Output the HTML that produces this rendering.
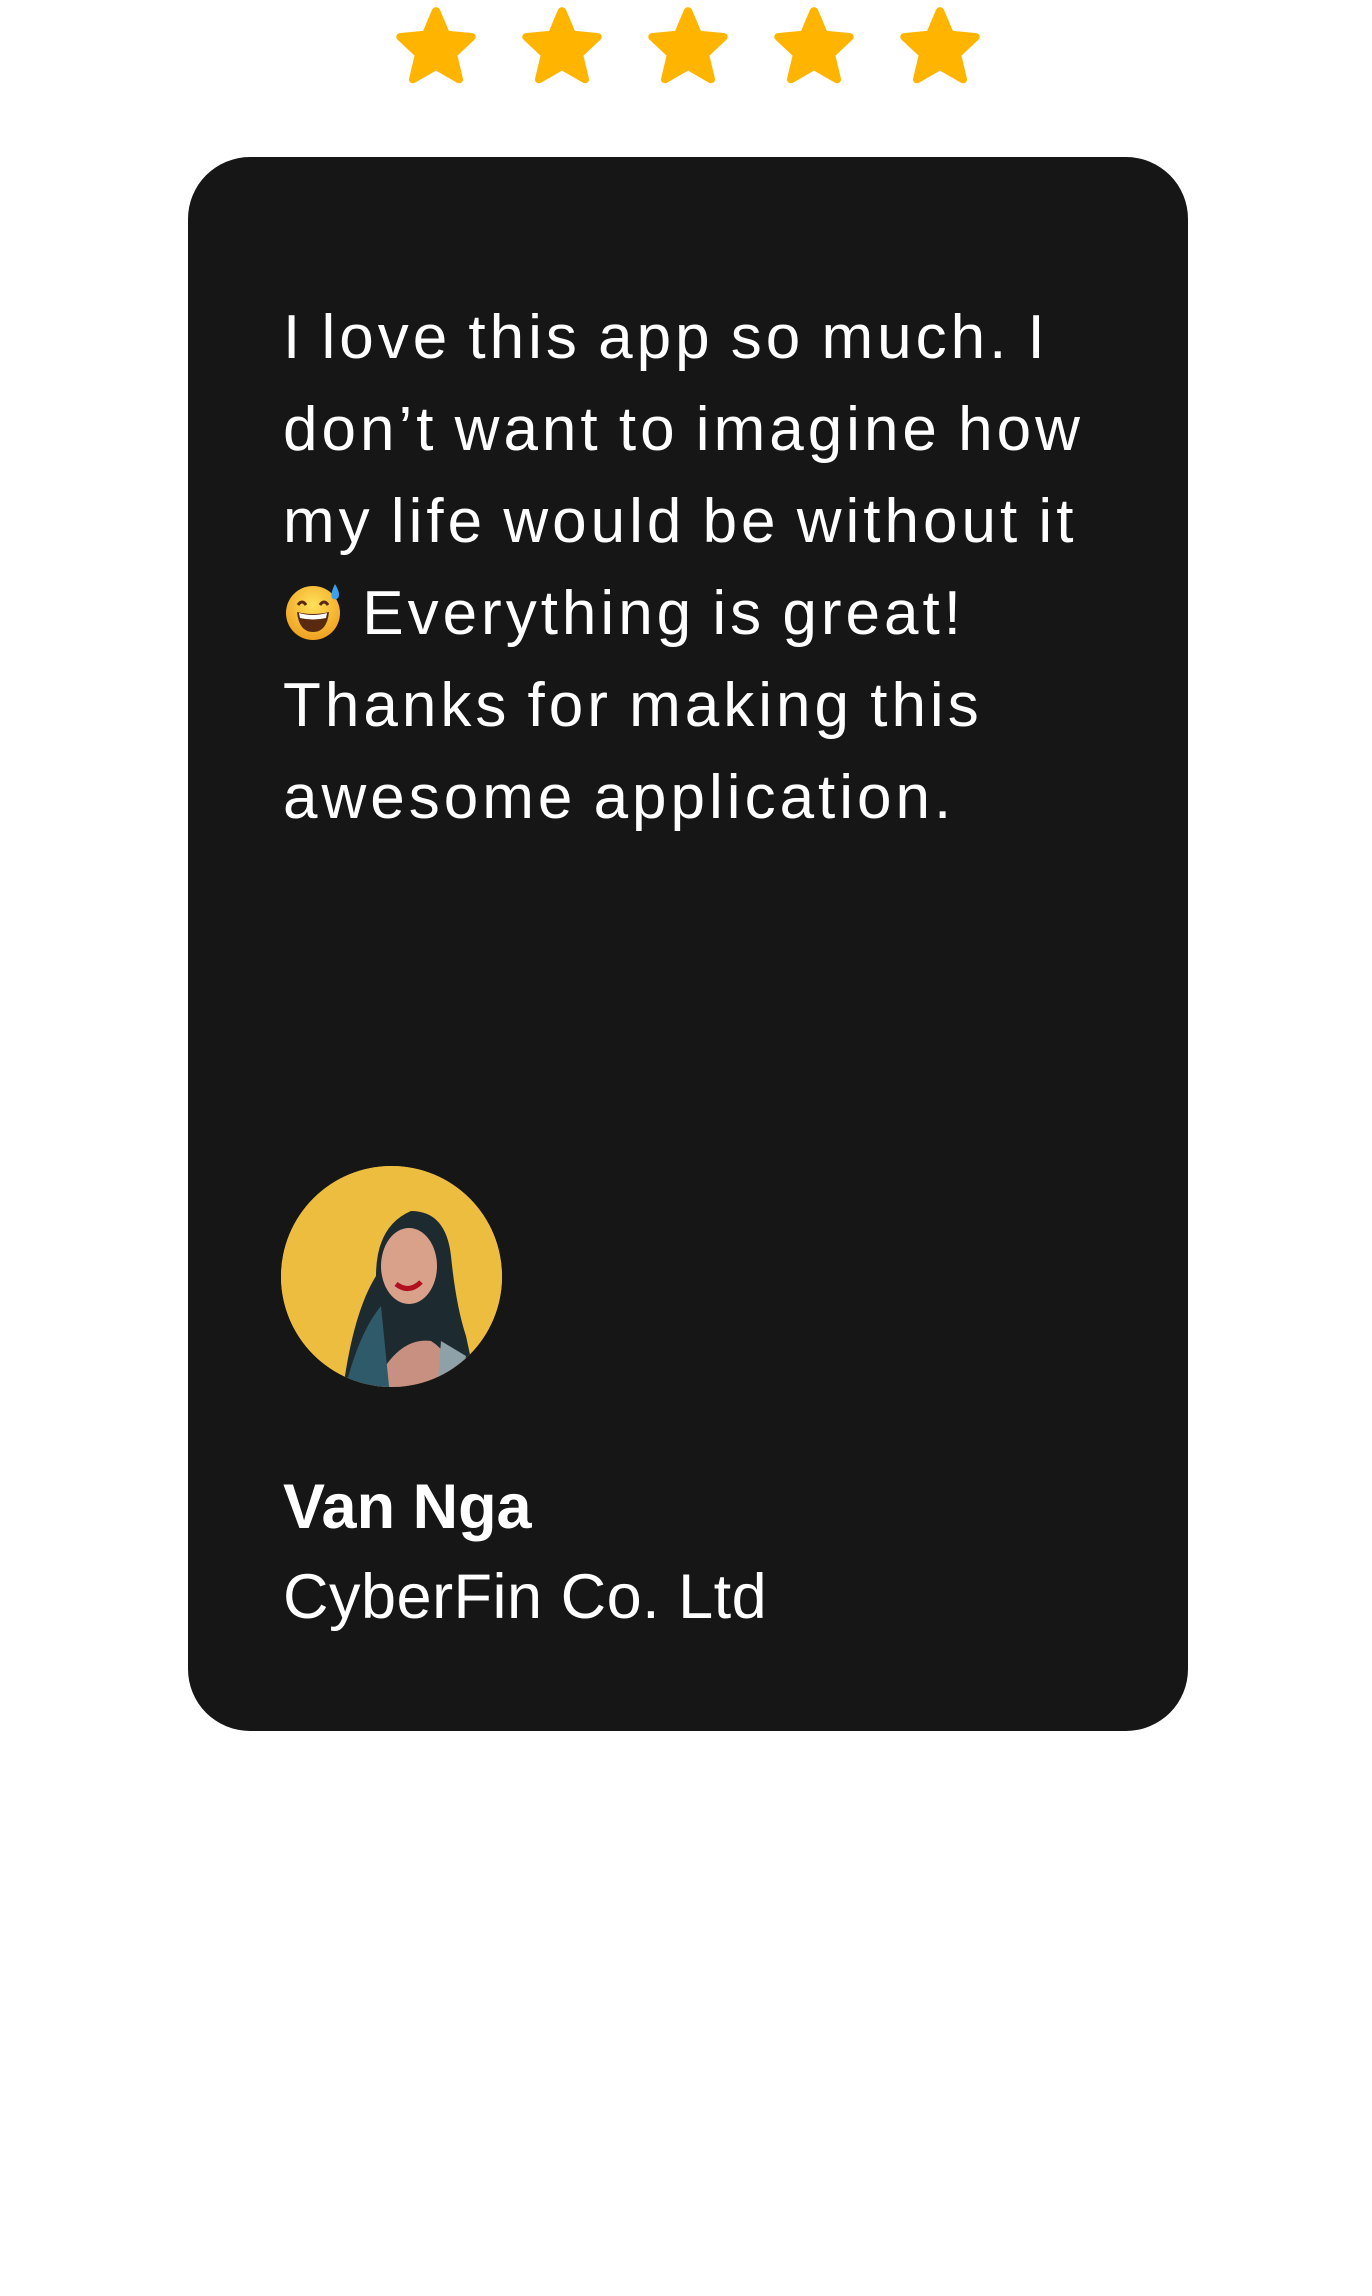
<!DOCTYPE html>
<html><head><meta charset="utf-8"><style>
html,body{margin:0;padding:0;background:#fff;}
body{width:1372px;height:2296px;position:relative;overflow:hidden;font-family:"Liberation Sans",sans-serif;}
.star{position:absolute;top:3px;width:88px;height:88px;}
.card{position:absolute;left:188px;top:157px;width:1000px;height:1574px;background:#161616;border-radius:62px;}
.q{position:absolute;left:283px;top:292px;width:1000px;color:#fff;font-size:62px;line-height:92px;font-weight:400;letter-spacing:4px;word-spacing:-4px;white-space:nowrap;}
.av{position:absolute;left:281px;top:1166px;width:221px;height:221px;border-radius:50%;overflow:hidden;background:#ecbd3f;}
.name{position:absolute;left:283px;top:1467px;color:#fff;font-size:63px;font-weight:700;line-height:80px;}
.co{position:absolute;left:283px;top:1557px;color:#fff;font-size:63px;font-weight:400;line-height:80px;letter-spacing:0.5px;}
</style></head><body>
<svg width="0" height="0" style="position:absolute"><defs><path id="s" d="M41 4 C43 4 44 5 45 7 L53 26 L74 28 C78 28 79 32 77 34 L61 49 L66 70 C67 74 63 76 60 74 L41 63 L22 74 C19 76 15 74 16 70 L21 49 L5 34 C3 32 4 28 8 28 L29 26 L37 7 C38 5 39 4 41 4Z" fill="#ffb400"/></defs></svg>
<svg class="star" style="left:392px" viewBox="0 0 82 82"><use href="#s"/></svg>
<svg class="star" style="left:518px" viewBox="0 0 82 82"><use href="#s"/></svg>
<svg class="star" style="left:644px" viewBox="0 0 82 82"><use href="#s"/></svg>
<svg class="star" style="left:770px" viewBox="0 0 82 82"><use href="#s"/></svg>
<svg class="star" style="left:896px" viewBox="0 0 82 82"><use href="#s"/></svg>
<div class="card"></div>
<div class="q">I love this app so much. I<br>don’t want to imagine how<br>my life would be without it<br><svg width="62" height="62" viewBox="0 0 62 62" style="vertical-align:-8px"><defs><radialGradient id="g" cx="50%" cy="35%" r="65%"><stop offset="0" stop-color="#ffe15a"/><stop offset="1" stop-color="#f0a020"/></radialGradient></defs><circle cx="30" cy="33" r="27" fill="url(#g)"/><path d="M14 32 Q30 36 46 32 Q44 52 30 52 Q16 52 14 32Z" fill="#5a2a10"/><path d="M16 33 Q30 37 44 33 L43 38 Q30 41 17 38Z" fill="#fff"/><path d="M15 25 Q19 19 23 25 M37 25 Q41 19 45 25" stroke="#5a2a10" stroke-width="3" fill="none"/><path d="M52 4 Q58 14 55 18 Q52 21 49 18 Q47 14 52 4Z" fill="#3aa0f0"/></svg> Everything is great!<br>Thanks for making this<br>awesome application.</div>
<div class="av"><svg width="221" height="221" viewBox="0 0 221 221"><rect width="221" height="221" fill="#ecbd3f"/><path d="M60 240 Q70 150 95 110 Q95 60 130 45 Q165 45 170 90 Q175 140 185 170 L200 240Z" fill="#1d2a30"/><ellipse cx="128" cy="100" rx="28" ry="38" fill="#d9a08a"/><path d="M115 118 Q128 128 140 116" stroke="#b01020" stroke-width="5" fill="none"/><path d="M85 240 Q110 170 150 175 Q175 190 180 240Z" fill="#c89080"/><path d="M60 240 Q75 170 100 140 L110 240Z" fill="#2f5a6a"/><path d="M160 175 L185 190 L175 240 L155 240Z" fill="#8ea0a8"/></svg></div>
<div class="name">Van Nga</div>
<div class="co">CyberFin Co. Ltd</div>
</body></html>
